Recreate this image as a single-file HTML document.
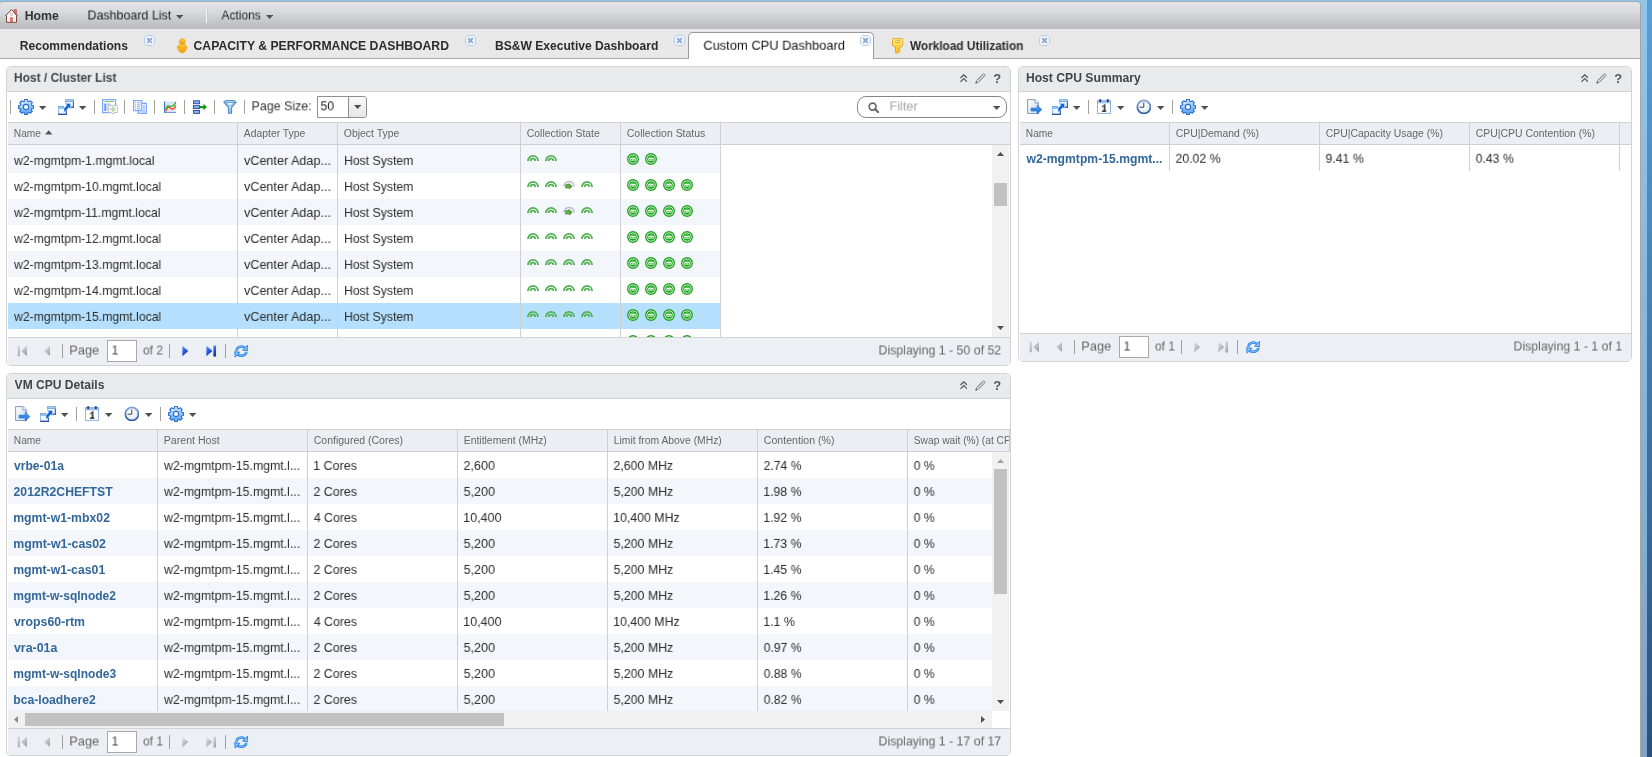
<!DOCTYPE html>
<html>
<head>
<meta charset="utf-8">
<title>Custom CPU Dashboard</title>
<style>
*{box-sizing:border-box;margin:0;padding:0}
html,body{width:1652px;height:757px;overflow:hidden;background:#fff}
body{font-family:"Liberation Sans",sans-serif;font-size:13px;color:#333;position:relative}
#root{position:absolute;left:0;top:0;width:1652px;height:757px;overflow:hidden}
#root div,#root span,#root svg{position:absolute}
.t{white-space:pre;transform-origin:0 68%;display:block;will-change:transform}
.sep{width:1px;height:14px;background:#a3a09c}
.alt{background:#f3f6fb}
.sel{background:#b5e0fd}
</style>
</head>
<body>
<svg width="0" height="0" style="position:absolute">
<defs>
<linearGradient id="gGear" x1="0" y1="0" x2="0" y2="1"><stop offset="0" stop-color="#cfe6ff"/><stop offset="0.5" stop-color="#8cc2f8"/><stop offset="1" stop-color="#5aa4f2"/></linearGradient>
<linearGradient id="gWin" x1="0" y1="0" x2="1" y2="1"><stop offset="0" stop-color="#ffffff"/><stop offset="1" stop-color="#e6effa"/></linearGradient>
<linearGradient id="gPage" x1="0" y1="0" x2="1" y2="1"><stop offset="0" stop-color="#ffffff"/><stop offset="1" stop-color="#c9daee"/></linearGradient>
<linearGradient id="gArrow" x1="0" y1="0" x2="0" y2="1"><stop offset="0" stop-color="#5aa9f8"/><stop offset="1" stop-color="#0f66d8"/></linearGradient>
<linearGradient id="gOr" x1="0" y1="0" x2="0" y2="1"><stop offset="0" stop-color="#ffcf4a"/><stop offset="1" stop-color="#f09a00"/></linearGradient>
<linearGradient id="gKey" x1="0" y1="0" x2="0" y2="1"><stop offset="0" stop-color="#fff27a"/><stop offset="1" stop-color="#ffc21a"/></linearGradient>
<linearGradient id="gNav" x1="0" y1="0" x2="0.6" y2="1"><stop offset="0" stop-color="#6fa0f8"/><stop offset="0.5" stop-color="#2a5fe0"/><stop offset="1" stop-color="#0a2db0"/></linearGradient>
<linearGradient id="gNavD" x1="0" y1="0" x2="0.6" y2="1"><stop offset="0" stop-color="#e2e2e6"/><stop offset="0.5" stop-color="#c3c4c9"/><stop offset="1" stop-color="#a2a3aa"/></linearGradient>
<linearGradient id="gRing" x1="0" y1="0" x2="0" y2="1"><stop offset="0" stop-color="#86a6d2"/><stop offset="1" stop-color="#2f5c9a"/></linearGradient>
<radialGradient id="gClock" cx="0.4" cy="0.35" r="0.7"><stop offset="0" stop-color="#ffffff"/><stop offset="1" stop-color="#e6edf6"/></radialGradient>

<symbol id="i-gear" viewBox="0 0 16 16">
 <path fill="url(#gGear)" stroke="#2a70cc" stroke-width="1.1" stroke-linejoin="round" d="M6.32 2.14 L6.55 0.54 L9.45 0.54 L9.68 2.14 L10.96 2.66 L12.25 1.70 L14.30 3.75 L13.34 5.04 L13.86 6.32 L15.46 6.55 L15.46 9.45 L13.86 9.68 L13.34 10.96 L14.30 12.25 L12.25 14.30 L10.96 13.34 L9.68 13.86 L9.45 15.46 L6.55 15.46 L6.32 13.86 L5.04 13.34 L3.75 14.30 L1.70 12.25 L2.66 10.96 L2.14 9.68 L0.54 9.45 L0.54 6.55 L2.14 6.32 L2.66 5.04 L1.70 3.75 L3.75 1.70 L5.04 2.66z"/>
 <circle cx="5" cy="4.4" r="0.9" fill="#fff" fill-opacity="0.75"/><circle cx="3.2" cy="7.6" r="0.8" fill="#fff" fill-opacity="0.6"/>
 <circle cx="8" cy="8" r="2.6" fill="#fff" stroke="#2a70cc" stroke-width="1.1"/>
</symbol>

<symbol id="i-win" viewBox="0 0 16 16">
 <rect x="7.4" y="0.4" width="8.4" height="8.2" fill="url(#gWin)"/>
 <rect x="7.1" y="0.2" width="8.8" height="2.7" fill="#68a5e3"/>
 <rect x="8" y="1.1" width="7" height="0.8" fill="#b9d8f6"/>
 <path d="M15.4 2.8v5.8" stroke="#2a5fa8" stroke-width="1.1" fill="none"/>
 <path d="M13 8.2h2.95" stroke="#1f4f98" stroke-width="1.2" fill="none"/>
 <path d="M7.6 2.8v1.6" stroke="#8fbaf0" stroke-width="1" fill="none"/>
 <rect x="0.4" y="7.3" width="8.4" height="8.3" fill="url(#gWin)"/>
 <rect x="0.1" y="7" width="5.8" height="2.7" fill="#68a5e3"/>
 <rect x="1" y="7.9" width="4" height="0.8" fill="#b9d8f6"/>
 <path d="M0.6 9.6v6" stroke="#8fbaf0" stroke-width="1" fill="none"/>
 <path d="M0.1 15.3h8.8" stroke="#1f4f98" stroke-width="1.3" fill="none"/>
 <path d="M8.4 11.4v4.4" stroke="#2a5fa8" stroke-width="1.1" fill="none"/>
 <path fill="#0a62e2" stroke="#ffffff" stroke-opacity="0.7" stroke-width="0.4" d="M7.3 4.6h5.2v5.4l-1.7-1.7-3.3 4.1-1.4 0.3v-3.4l2.9-3.1z"/>
</symbol>

<symbol id="i-tbl" viewBox="0 0 16 16">
 <rect x="0.6" y="0.6" width="13" height="13" fill="#fff" stroke="#7aa6ff" stroke-width="1.2"/>
 <rect x="2.5" y="2" width="9.4" height="1" fill="#7cc36e"/>
 <rect x="2.2" y="4.5" width="2.2" height="7.5" fill="#6f9cf3"/>
 <rect x="5.3" y="4.5" width="3" height="1.6" fill="#9ab9f8"/><rect x="5.3" y="7" width="3" height="1.6" fill="#9ab9f8"/><rect x="5.3" y="9.5" width="3" height="1.6" fill="#9ab9f8"/>
 <path d="M7.3 6.3h7.4q1 0 1 1v5.2q0 1-1 1h-2.2l-1.5 1.6-1.5-1.6h-2.2q-1 0-1-1v-5.2q0-1 1-1z" fill="#f4f4f4" stroke="#b5b5b5" stroke-width="0.8"/>
 <path d="M11 7.4l1.3 1.6h-2.6zM11 12.9l1.3-1.6h-2.6zM8 10.1l1.6-1.2v2.4zM14 10.1l-1.6-1.2v2.4z" fill="#86cf7c"/>
 <rect x="10.3" y="9.4" width="1.4" height="1.4" fill="#86cf7c"/>
</symbol>

<symbol id="i-docs" viewBox="0 0 14 14">
 <rect x="5.2" y="3.4" width="8.2" height="10" fill="#fff" stroke="#7aa6ff" stroke-width="1.2"/>
 <rect x="0.6" y="0.6" width="8.2" height="10" fill="#fff" stroke="#7aa6ff" stroke-width="1.2"/>
 <g fill="#7aa6ff"><rect x="2" y="2.3" width="1" height="1"/><rect x="4" y="2.3" width="3.4" height="1"/><rect x="2" y="4.3" width="1" height="1"/><rect x="4" y="4.3" width="3.4" height="1"/><rect x="2" y="6.3" width="1" height="1"/><rect x="4" y="6.3" width="3.4" height="1"/><rect x="2" y="8.3" width="1" height="1"/><rect x="4" y="8.3" width="3.4" height="1"/>
 <rect x="10" y="5.4" width="2.2" height="1"/><rect x="10" y="7.4" width="2.2" height="1"/><rect x="10" y="9.4" width="2.2" height="1"/><rect x="6.8" y="11.4" width="1" height="1"/><rect x="8.8" y="11.4" width="3.4" height="1"/></g>
</symbol>

<symbol id="i-chart" viewBox="0 0 13 13">
 <rect x="1" y="0.5" width="11.5" height="11" fill="#d9e6f7"/>
 <path d="M0.6 0.4v12h12" fill="none" stroke="#3f79c0" stroke-width="1.2"/>
 <path d="M1.6 10.8l2.6-4.6 2.2 1 1.8 1.3 2.2-0.6 2.2-3.4" fill="none" stroke="#ff4a1a" stroke-width="1.4" stroke-linejoin="round"/>
 <path d="M1.6 8.6l2.2-3.6 2.6 0.6 2.4-0.3 1.6-1 2.2-3.4" fill="none" stroke="#2fb82a" stroke-width="1.4" stroke-linejoin="round"/>
</symbol>

<symbol id="i-rows" viewBox="0 0 15 14">
 <g fill="#8db4ff" stroke="#2a4f9e" stroke-width="1"><rect x="0.6" y="0.6" width="6.2" height="3"/><rect x="0.6" y="5.6" width="6.2" height="3"/><rect x="0.6" y="10.6" width="6.2" height="3"/></g>
 <path d="M6.8 6h4v-2.4l3.6 3.5-3.6 3.5v-2.4h-4z" fill="#0b9a0b"/>
</symbol>

<symbol id="i-funnel" viewBox="0 0 14 14">
 <path d="M0.8 2.2l2-1.6h8.4l2 1.6-4.7 5.3v5.7h-3v-5.7z" fill="#eef5fc" stroke="#4c90d0" stroke-width="1.2" stroke-linejoin="round"/>
 <path d="M1.6 2.4h10.8M3 2.6l4 4 4-4M7 8v4.6" fill="none" stroke="#4c90d0" stroke-width="0.9"/>
</symbol>

<symbol id="i-export" viewBox="0 0 16 16">
 <path d="M0.6 0.6h7.8l3.4 3.4v11h-11.2z" fill="url(#gPage)" stroke="#8398b6" stroke-width="1"/>
 <path d="M8.2 0.8v3.4h3.4" fill="#f9fbfe" stroke="#8398b6" stroke-width="0.9"/>
 <path d="M4.2 9.3h6.3v-3.2l4.9 4.8-4.9 4.8v-3.2h-6.3z" fill="url(#gArrow)" stroke="#1a68d0" stroke-width="0.5"/>
</symbol>

<symbol id="i-cal" viewBox="0 0 14 15">
 <rect x="0.5" y="1.6" width="13" height="12.8" fill="#fff" stroke="#8fb2e2" stroke-width="1"/>
 <rect x="0.5" y="1.6" width="13" height="2.2" fill="#a3c2ea" stroke="#8fb2e2" stroke-width="1"/>
 <rect x="2.2" y="0.2" width="2" height="2.7" rx="0.5" fill="#173a72"/><rect x="9.8" y="0.2" width="2" height="2.7" rx="0.5" fill="#173a72"/>
 <path d="M4.8 7.4l2.6-2.1h1.1v6.6h-1.9v-4.7l-1.8 1.3z" fill="#4a4a4a"/>
 <rect x="4.8" y="11.6" width="4.6" height="1.2" rx="0.5" fill="#111"/>
</symbol>

<symbol id="i-clock" viewBox="0 0 16 16">
 <circle cx="8" cy="8" r="6.65" fill="url(#gClock)" stroke="url(#gRing)" stroke-width="1.8"/>
 <g fill="#b3c6e2"><circle cx="12.70" cy="8.00" r="0.5"/><circle cx="11.32" cy="11.32" r="0.5"/><circle cx="8.00" cy="12.70" r="0.5"/><circle cx="4.68" cy="11.32" r="0.5"/><circle cx="4.68" cy="4.68" r="0.5"/><circle cx="11.32" cy="4.68" r="0.5"/></g>
 <path d="M7.9 3.4v4.9h-4.3" fill="none" stroke="#3c3c3c" stroke-width="1"/>
</symbol>

<symbol id="i-first" viewBox="0 0 11 12">
 <rect x="0.4" y="0.4" width="2.7" height="11.2" stroke="#ececf0" stroke-width="0.5"/>
 <path d="M10.4 0.5v11l-6.3-5.5z"/>
</symbol>
<symbol id="i-prev" viewBox="0 0 7 12"><path d="M6.6 0.5v11l-6.3-5.5z"/></symbol>
<symbol id="i-next" viewBox="0 0 7 12"><path d="M0.4 0.5v11l6.3-5.5z"/></symbol>
<symbol id="i-last" viewBox="0 0 11 12">
 <path d="M0.4 0.5v11l6.3-5.5z"/>
 <rect x="7.6" y="0.4" width="2.9" height="11.4"/>
</symbol>

<symbol id="i-refresh" viewBox="0 0 15 14">
 <path d="M2.4 6.4A5.2 4.6 0 0 1 11.2 3.6" fill="none" stroke="#1c7ae6" stroke-width="2.6"/>
 <path d="M2.4 6.2A5.2 4.6 0 0 1 11.2 3.5" fill="none" stroke="#9fd0ff" stroke-width="0.9"/>
 <path d="M8.9 5.9l5.4 0.6-0.5-5.6z" fill="#8cc4fb" stroke="#1c7ae6" stroke-width="0.9" stroke-linejoin="round"/>
 <path d="M12.6 7.6A5.2 4.6 0 0 1 3.8 10.4" fill="none" stroke="#1c7ae6" stroke-width="2.6"/>
 <path d="M12.6 7.8A5.2 4.6 0 0 1 3.8 10.5" fill="none" stroke="#9fd0ff" stroke-width="0.9"/>
 <path d="M6.1 8.1l-5.4-0.6 0.5 5.6z" fill="#8cc4fb" stroke="#1c7ae6" stroke-width="0.9" stroke-linejoin="round"/>
</symbol>

<symbol id="i-collapse" viewBox="0 0 8 9"><path d="M0.5 4.2l3.5-3.4 3.5 3.4M0.5 8.3l3.5-3.4 3.5 3.4" fill="none" stroke="#555" stroke-width="1.3"/></symbol>
<symbol id="i-pencil" viewBox="0 0 12 12">
 <path d="M0.8 11.2l0.9-3 7-7q0.8-0.6 1.7 0.2 0.8 0.9 0.2 1.7l-7 7z" fill="#f2f2f2" stroke="#7d7d7d" stroke-width="1" stroke-linejoin="round"/>
 <path d="M2.6 8.6l6.6-6.6M3.6 9.8l6.8-6.8" stroke="#909090" stroke-width="0.8" fill="none"/>
 <path d="M0.7 11.3l0.6-2 1.4 1.4z" fill="#555"/>
</symbol>
<symbol id="i-close" viewBox="0 0 11 11">
 <path d="M2.6 0.5h5.8l2.1 2.1v5.8l-2.1 2.1h-5.8l-2.1-2.1v-5.8z" fill="#f1f5fb" stroke="#b7cdee" stroke-width="1"/>
 <path d="M3.2 3.2l4.6 4.6M7.8 3.2l-4.6 4.6" stroke="#8aa6d4" stroke-width="1.7"/>
</symbol>

<symbol id="i-home" viewBox="0 0 13 14">
 <rect x="9.2" y="0.5" width="2.3" height="5" fill="#ee6a6a" stroke="#a05a4a" stroke-width="0.6"/>
 <path d="M1.4 6.9v6.4h10.2v-6.4l-5.1-5.6z" fill="#fbf8f0"/>
 <path d="M0.4 6.9l6.1-6.3 6.1 6.3" fill="none" stroke="#7a4838" stroke-width="1" stroke-linejoin="round"/>
 <path d="M1.5 6.4v6.9h10v-6.9" fill="none" stroke="#7a4838" stroke-width="1"/>
 <rect x="5.3" y="8.5" width="2.3" height="4.4" fill="#f06a6a" stroke="#d04a4a" stroke-width="0.4"/>
 <rect x="5.5" y="4.2" width="2" height="2" fill="#fff" stroke="#b8a8b8" stroke-width="0.6"/>
</symbol>

<symbol id="i-person" viewBox="0 0 11 16">
 <ellipse cx="5.5" cy="10.4" rx="4.3" ry="5.2" fill="url(#gOr)" stroke="#f0a010" stroke-width="0.6"/>
 <ellipse cx="1.1" cy="9.6" rx="1" ry="1.6" fill="#f6a90c"/><ellipse cx="9.9" cy="9.6" rx="1" ry="1.6" fill="#f6a90c"/>
 <circle cx="5.5" cy="3.6" r="3.1" fill="url(#gOr)" stroke="#f0a010" stroke-width="0.6"/>
</symbol>

<symbol id="i-key" viewBox="0 0 12 16">
 <path d="M1.5 0.6h9q1 0 1 1v5.6l-1.5 1.6h-1.4v0.8l-1 1 1 0.9-1 1 1 0.9-2.2 2.2h-2.8v-6.8h-1.6l-1.5-1.6v-5.6q0-1 1-1z" fill="url(#gKey)" stroke="#dfa02c" stroke-width="1" stroke-linejoin="round"/>
 <rect x="3.7" y="2.7" width="4.6" height="1.9" rx="0.95" fill="#fffce6" stroke="#dc982a" stroke-width="0.9"/>
 <path d="M5 9.5l2 -1M5 12l2.2-1.4M5 14.4l1.8-1.2" stroke="#ffa800" stroke-width="0.7" fill="none"/>
</symbol>

<symbol id="i-arc" viewBox="0 0 12 7">
 <path d="M1 6.9a5 5 0 0 1 10 0" fill="none" stroke="#52b052" stroke-width="1.9"/>
 <path d="M3.7 6.9a2.3 2.3 0 0 1 4.6 0" fill="none" stroke="#52b052" stroke-width="1.7"/>
</symbol>
<symbol id="i-arcg" viewBox="0 0 12 10">
 <path d="M0.8 6.6a5.2 5.2 0 0 1 10.4 0" fill="none" stroke="#b4bcc9" stroke-width="1.5"/>
 <path d="M2.2 4.6l2.6-0.5 1.6-0.9 0.5 1 2.8 1.8-3.3 3.6-0.5-1.3-3.7 0.2z" fill="#4f9a34"/>
 <path d="M3.4 6.3h3.6" stroke="#a6d48a" stroke-width="0.7"/>
</symbol>
<symbol id="i-stat" viewBox="0 0 12 12">
 <circle cx="6" cy="6" r="5.3" fill="#fff" stroke="#1fa31f" stroke-width="1.4"/>
 <circle cx="6" cy="6" r="3.8" fill="#1fa31f"/>
 <path d="M3.3 5.5l0.9-1.2 0.8 0.6h2l0.8-0.6 0.9 1.2v2h-5.4z" fill="#fff"/>
 <path d="M5 4.2l1-0.9 1 0.9z" fill="#fff"/>
 <rect x="3.6" y="5.7" width="4.8" height="1.7" fill="#b5e6ae"/>
 <rect x="4.3" y="6.1" width="0.9" height="0.9" fill="#1fa31f"/><rect x="6.8" y="6.1" width="0.9" height="0.9" fill="#1fa31f"/>
</symbol>
<symbol id="i-mag" viewBox="0 0 11 11">
 <circle cx="4.4" cy="4.4" r="3.3" fill="none" stroke="#666" stroke-width="1.6"/>
 <path d="M6.8 6.8l3.4 3.4" stroke="#666" stroke-width="2" stroke-linecap="round"/>
</symbol>
</defs>
</svg>
<div id="root">
<div style="left:0px;top:0px;width:1652px;height:3px;background:#8fc5ea"></div>
<div style="left:1640px;top:0px;width:7px;height:757px;background:linear-gradient(#91c5ea,#7fa3c5)"></div>
<div style="left:1647px;top:0px;width:5px;height:757px;background:linear-gradient(#5a9fd4,#29507d)"></div>
<div style="left:0px;top:1.3px;width:1640px;height:27.4px;border-radius:3px 4px 0 0;border-top:1px solid #a9aaad;background:linear-gradient(#e3e4e7 0%,#d9dadd 35%,#c7c8cc 70%,#b9babe 100%)"></div>
<div style="left:1640px;top:3px;width:1px;height:754px;background:#a6a6a8"></div>
<svg style="left:5px;top:9px" width="13" height="14"><use href="#i-home"/></svg>
<span class="t" style="left:24px;top:7px;font-size:12px;line-height:16px;color:#333;font-weight:bold;transform:translate(0.68px,0.84px) scale(1.0271,1.083);transform-origin:0 12.16px;">Home</span>
<span class="t" style="left:87px;top:7px;font-size:13px;line-height:16px;color:#262626;transform:translate(0.48px,0.50px) scaleX(0.9584);transform-origin:0 12.50px;">Dashboard List</span>
<svg style="left:176px;top:14.5px" width="7.2" height="4"><path d="M0 0h7.2l-3.6 4z" fill="#505050"/></svg>
<div style="left:206px;top:9px;width:1px;height:14px;background:#f4f4f4"></div>
<div style="left:207px;top:9px;width:1px;height:14px;background:#c9c9cc"></div>
<span class="t" style="left:221px;top:7px;font-size:13px;line-height:16px;color:#262626;transform:translate(0.48px,0.50px) scaleX(0.9182);transform-origin:0 12.50px;">Actions</span>
<svg style="left:266px;top:14.5px" width="7.2" height="4"><path d="M0 0h7.2l-3.6 4z" fill="#505050"/></svg>
<div style="left:0px;top:29px;width:1640px;height:30px;background:#e8e8e8;border-bottom:1px solid #a9a9a9"></div>
<span class="t" style="left:19px;top:38px;font-size:12px;line-height:16px;color:#2c2c2c;font-weight:bold;transform:translate(0.69px,0.04px) scale(1.0088,1.083);transform-origin:0 12.16px;">Recommendations</span>
<svg style="left:144px;top:35px" width="11" height="11"><use href="#i-close"/></svg>
<svg style="left:177px;top:38px" width="10.5" height="15.5"><use href="#i-person"/></svg>
<span class="t" style="left:193px;top:38px;font-size:12px;line-height:16px;color:#2c2c2c;font-weight:bold;transform:translate(0.50px,0.04px) scale(1.0184,1.083);transform-origin:0 12.16px;">CAPACITY &amp; PERFORMANCE DASHBOARD</span>
<svg style="left:465px;top:35px" width="11" height="11"><use href="#i-close"/></svg>
<span class="t" style="left:494px;top:38px;font-size:12px;line-height:16px;color:#2c2c2c;font-weight:bold;transform:translate(0.89px,0.04px) scale(1.0084,1.083);transform-origin:0 12.16px;">BS&amp;W Executive Dashboard</span>
<svg style="left:674px;top:35px" width="11" height="11"><use href="#i-close"/></svg>
<div style="left:688px;top:32px;width:186px;height:27px;background:#fff;border:1px solid #9a9a9a;border-bottom:0;border-radius:5px 5px 0 0"></div>
<span class="t" style="left:703px;top:37px;font-size:13px;line-height:16px;color:#141414;transform:translate(0.35px,0.70px) scaleX(0.9904);transform-origin:0 12.50px;">Custom CPU Dashboard</span>
<svg style="left:860px;top:35px" width="11" height="11"><use href="#i-close"/></svg>
<svg style="left:892px;top:38px" width="11.5" height="15.5"><use href="#i-key"/></svg>
<span class="t" style="left:909px;top:38px;font-size:12px;line-height:16px;color:#2c2c2c;font-weight:bold;transform:translate(0.99px,0.04px) scale(0.9854,1.083);transform-origin:0 12.16px;">Workload Utilization</span>
<svg style="left:1039px;top:35px" width="11" height="11"><use href="#i-close"/></svg>
<div style="left:6px;top:66px;width:1005px;height:300px;border:1px solid #d3d3d3;border-radius:5px;background:#fff"></div>
<div style="left:7px;top:67px;width:1003px;height:24px;background:#e9eaeb;border-radius:4px 4px 0 0"></div>
<div style="left:7px;top:91px;width:1003px;height:1px;background:#d3d3d3"></div>
<span class="t" style="left:13px;top:69px;font-size:12px;line-height:16px;color:#444;font-weight:bold;transform:translate(0.90px,0.84px) scale(0.9977,1.083);transform-origin:0 12.16px;">Host / Cluster List</span>
<svg style="left:959.5px;top:74px" width="7.5" height="8.5"><use href="#i-collapse"/></svg>
<svg style="left:975px;top:73px" width="11" height="11"><use href="#i-pencil"/></svg>
<span class="t" style="left:993px;top:70px;font-size:12px;line-height:16px;color:#555;font-weight:bold;transform:translate(0.20px,0.64px) scale(1.0817,1.083);transform-origin:0 12.16px;">?</span>
<div class="sep" style="left:10px;top:100px;height:14px"></div>
<svg style="left:18px;top:99px" width="16" height="16"><use href="#i-gear"/></svg>
<svg style="left:39px;top:106px" width="7.2" height="4"><path d="M0 0h7.2l-3.6 4z" fill="#505050"/></svg>
<svg style="left:58px;top:99px" width="16" height="16"><use href="#i-win"/></svg>
<svg style="left:79px;top:106px" width="7.2" height="4"><path d="M0 0h7.2l-3.6 4z" fill="#505050"/></svg>
<div class="sep" style="left:94px;top:100px;height:14px"></div>
<svg style="left:102px;top:99px" width="16" height="16"><use href="#i-tbl"/></svg>
<div class="sep" style="left:124px;top:100px;height:14px"></div>
<svg style="left:133px;top:100px" width="14" height="14"><use href="#i-docs"/></svg>
<div class="sep" style="left:154px;top:100px;height:14px"></div>
<svg style="left:164px;top:100.5px" width="12.5" height="12.5"><use href="#i-chart"/></svg>
<div class="sep" style="left:184px;top:100px;height:14px"></div>
<svg style="left:192.5px;top:100px" width="14.5" height="14"><use href="#i-rows"/></svg>
<div class="sep" style="left:214px;top:100px;height:14px"></div>
<svg style="left:223px;top:100.3px" width="14" height="14"><use href="#i-funnel"/></svg>
<div class="sep" style="left:244px;top:100px;height:14px"></div>
<span class="t" style="left:251px;top:98px;font-size:13px;line-height:16px;color:#333;transform:translate(0.48px,0.30px) scaleX(0.9568);transform-origin:0 12.50px;">Page Size:</span>
<div style="left:317px;top:96px;width:50px;height:22px;border:1px solid #8f8f8f;background:#fff;border-radius:0 3px 3px 0"></div>
<div style="left:348px;top:97px;width:1px;height:20px;background:#8f8f8f"></div>
<div style="left:349px;top:97px;width:17px;height:20px;background:linear-gradient(#f8f8f8,#e6e6e6);border-radius:0 2px 2px 0"></div>
<span class="t" style="left:320px;top:98px;font-size:13px;line-height:16px;color:#222;transform:translate(0.50px,0.30px) scaleX(0.9350);transform-origin:0 12.50px;">50</span>
<svg style="left:354px;top:105px" width="7.2" height="4"><path d="M0 0h7.2l-3.6 4z" fill="#505050"/></svg>
<div style="left:857px;top:96px;width:150px;height:22px;border:1px solid #868686;background:#fff;border-radius:9px"></div>
<svg style="left:867.8px;top:101.5px" width="11.5" height="11.5"><use href="#i-mag"/></svg>
<span class="t" style="left:889px;top:98px;font-size:13px;line-height:16px;color:#a8a8a8;transform:translate(0.46px,0.50px) scaleX(0.9780);transform-origin:0 12.50px;">Filter</span>
<svg style="left:993px;top:106px" width="7.2" height="4"><path d="M0 0h7.2l-3.6 4z" fill="#505050"/></svg>
<div style="left:8px;top:122px;width:1002px;height:23px;background:#ebeef2;border-top:1px solid #d3d3d3;border-bottom:1px solid #cfcfcf"></div>
<span class="t" style="left:13px;top:127px;font-size:10px;line-height:13px;color:#666;transform:translate(0.80px,0.23px) scaleX(1.0188);transform-origin:0 9.96px;">Name</span>
<div style="left:237px;top:122px;width:1px;height:23px;background:#cfcfcf"></div>
<span class="t" style="left:243px;top:127px;font-size:10px;line-height:13px;color:#666;transform:translate(0.80px,0.23px) scaleX(1.0366);transform-origin:0 9.96px;">Adapter Type</span>
<div style="left:337px;top:122px;width:1px;height:23px;background:#cfcfcf"></div>
<span class="t" style="left:343px;top:127px;font-size:10px;line-height:13px;color:#666;transform:translate(0.80px,0.23px) scaleX(1.0427);transform-origin:0 9.96px;">Object Type</span>
<div style="left:520px;top:122px;width:1px;height:23px;background:#cfcfcf"></div>
<span class="t" style="left:526px;top:127px;font-size:10px;line-height:13px;color:#666;transform:translate(0.80px,0.23px) scaleX(1.0420);transform-origin:0 9.96px;">Collection State</span>
<div style="left:620px;top:122px;width:1px;height:23px;background:#cfcfcf"></div>
<span class="t" style="left:626px;top:127px;font-size:10px;line-height:13px;color:#666;transform:translate(0.80px,0.23px) scaleX(1.0461);transform-origin:0 9.96px;">Collection Status</span>
<div style="left:720px;top:122px;width:1px;height:23px;background:#cfcfcf"></div>
<svg style="left:45px;top:130px" width="8" height="5"><path d="M0 4.6l3.7-4.4 3.7 4.4z" fill="#555"/></svg>
<div style="left:8px;top:145px;width:713px;height:2px;background:#f3f6fb"></div>
<div class="alt" style="left:8px;top:147px;width:713px;height:26px"></div>
<span class="t" style="left:14px;top:152px;font-size:13px;line-height:16px;color:#2a2a2a;transform:translate(0.00px,0.90px) scaleX(0.9389);transform-origin:0 12.50px;">w2-mgmtpm-1.mgmt.local</span>
<span class="t" style="left:244px;top:152px;font-size:13px;line-height:16px;color:#2a2a2a;transform:translate(0.00px,0.90px) scaleX(0.9707);transform-origin:0 12.50px;">vCenter Adap...</span>
<span class="t" style="left:344px;top:152px;font-size:13px;line-height:16px;color:#2a2a2a;transform:translate(0.00px,0.90px) scaleX(0.9420);transform-origin:0 12.50px;">Host System</span>
<svg style="left:527px;top:154px" width="12" height="7"><use href="#i-arc"/></svg>
<svg style="left:545px;top:154px" width="12" height="7"><use href="#i-arc"/></svg>
<svg style="left:627px;top:153px" width="12" height="12"><use href="#i-stat"/></svg>
<svg style="left:645px;top:153px" width="12" height="12"><use href="#i-stat"/></svg>
<span class="t" style="left:14px;top:178px;font-size:13px;line-height:16px;color:#2a2a2a;transform:translate(0.00px,0.90px) scaleX(0.9390);transform-origin:0 12.50px;">w2-mgmtpm-10.mgmt.local</span>
<span class="t" style="left:244px;top:178px;font-size:13px;line-height:16px;color:#2a2a2a;transform:translate(0.00px,0.90px) scaleX(0.9707);transform-origin:0 12.50px;">vCenter Adap...</span>
<span class="t" style="left:344px;top:178px;font-size:13px;line-height:16px;color:#2a2a2a;transform:translate(0.00px,0.90px) scaleX(0.9420);transform-origin:0 12.50px;">Host System</span>
<svg style="left:527px;top:180px" width="12" height="7"><use href="#i-arc"/></svg>
<svg style="left:545px;top:180px" width="12" height="7"><use href="#i-arc"/></svg>
<svg style="left:563px;top:180px" width="12" height="10"><use href="#i-arcg"/></svg>
<svg style="left:581px;top:180px" width="12" height="7"><use href="#i-arc"/></svg>
<svg style="left:627px;top:179px" width="12" height="12"><use href="#i-stat"/></svg>
<svg style="left:645px;top:179px" width="12" height="12"><use href="#i-stat"/></svg>
<svg style="left:663px;top:179px" width="12" height="12"><use href="#i-stat"/></svg>
<svg style="left:681px;top:179px" width="12" height="12"><use href="#i-stat"/></svg>
<div class="alt" style="left:8px;top:199px;width:713px;height:26px"></div>
<span class="t" style="left:14px;top:204px;font-size:13px;line-height:16px;color:#2a2a2a;transform:translate(0.00px,0.90px) scaleX(0.9397);transform-origin:0 12.50px;">w2-mgmtpm-11.mgmt.local</span>
<span class="t" style="left:244px;top:204px;font-size:13px;line-height:16px;color:#2a2a2a;transform:translate(0.00px,0.90px) scaleX(0.9707);transform-origin:0 12.50px;">vCenter Adap...</span>
<span class="t" style="left:344px;top:204px;font-size:13px;line-height:16px;color:#2a2a2a;transform:translate(0.00px,0.90px) scaleX(0.9420);transform-origin:0 12.50px;">Host System</span>
<svg style="left:527px;top:206px" width="12" height="7"><use href="#i-arc"/></svg>
<svg style="left:545px;top:206px" width="12" height="7"><use href="#i-arc"/></svg>
<svg style="left:563px;top:206px" width="12" height="10"><use href="#i-arcg"/></svg>
<svg style="left:581px;top:206px" width="12" height="7"><use href="#i-arc"/></svg>
<svg style="left:627px;top:205px" width="12" height="12"><use href="#i-stat"/></svg>
<svg style="left:645px;top:205px" width="12" height="12"><use href="#i-stat"/></svg>
<svg style="left:663px;top:205px" width="12" height="12"><use href="#i-stat"/></svg>
<svg style="left:681px;top:205px" width="12" height="12"><use href="#i-stat"/></svg>
<span class="t" style="left:14px;top:230px;font-size:13px;line-height:16px;color:#2a2a2a;transform:translate(0.00px,0.90px) scaleX(0.9390);transform-origin:0 12.50px;">w2-mgmtpm-12.mgmt.local</span>
<span class="t" style="left:244px;top:230px;font-size:13px;line-height:16px;color:#2a2a2a;transform:translate(0.00px,0.90px) scaleX(0.9707);transform-origin:0 12.50px;">vCenter Adap...</span>
<span class="t" style="left:344px;top:230px;font-size:13px;line-height:16px;color:#2a2a2a;transform:translate(0.00px,0.90px) scaleX(0.9420);transform-origin:0 12.50px;">Host System</span>
<svg style="left:527px;top:232px" width="12" height="7"><use href="#i-arc"/></svg>
<svg style="left:545px;top:232px" width="12" height="7"><use href="#i-arc"/></svg>
<svg style="left:563px;top:232px" width="12" height="7"><use href="#i-arc"/></svg>
<svg style="left:581px;top:232px" width="12" height="7"><use href="#i-arc"/></svg>
<svg style="left:627px;top:231px" width="12" height="12"><use href="#i-stat"/></svg>
<svg style="left:645px;top:231px" width="12" height="12"><use href="#i-stat"/></svg>
<svg style="left:663px;top:231px" width="12" height="12"><use href="#i-stat"/></svg>
<svg style="left:681px;top:231px" width="12" height="12"><use href="#i-stat"/></svg>
<div class="alt" style="left:8px;top:251px;width:713px;height:26px"></div>
<span class="t" style="left:14px;top:256px;font-size:13px;line-height:16px;color:#2a2a2a;transform:translate(0.00px,0.90px) scaleX(0.9390);transform-origin:0 12.50px;">w2-mgmtpm-13.mgmt.local</span>
<span class="t" style="left:244px;top:256px;font-size:13px;line-height:16px;color:#2a2a2a;transform:translate(0.00px,0.90px) scaleX(0.9707);transform-origin:0 12.50px;">vCenter Adap...</span>
<span class="t" style="left:344px;top:256px;font-size:13px;line-height:16px;color:#2a2a2a;transform:translate(0.00px,0.90px) scaleX(0.9420);transform-origin:0 12.50px;">Host System</span>
<svg style="left:527px;top:258px" width="12" height="7"><use href="#i-arc"/></svg>
<svg style="left:545px;top:258px" width="12" height="7"><use href="#i-arc"/></svg>
<svg style="left:563px;top:258px" width="12" height="7"><use href="#i-arc"/></svg>
<svg style="left:581px;top:258px" width="12" height="7"><use href="#i-arc"/></svg>
<svg style="left:627px;top:257px" width="12" height="12"><use href="#i-stat"/></svg>
<svg style="left:645px;top:257px" width="12" height="12"><use href="#i-stat"/></svg>
<svg style="left:663px;top:257px" width="12" height="12"><use href="#i-stat"/></svg>
<svg style="left:681px;top:257px" width="12" height="12"><use href="#i-stat"/></svg>
<span class="t" style="left:14px;top:282px;font-size:13px;line-height:16px;color:#2a2a2a;transform:translate(0.00px,0.90px) scaleX(0.9390);transform-origin:0 12.50px;">w2-mgmtpm-14.mgmt.local</span>
<span class="t" style="left:244px;top:282px;font-size:13px;line-height:16px;color:#2a2a2a;transform:translate(0.00px,0.90px) scaleX(0.9707);transform-origin:0 12.50px;">vCenter Adap...</span>
<span class="t" style="left:344px;top:282px;font-size:13px;line-height:16px;color:#2a2a2a;transform:translate(0.00px,0.90px) scaleX(0.9420);transform-origin:0 12.50px;">Host System</span>
<svg style="left:527px;top:284px" width="12" height="7"><use href="#i-arc"/></svg>
<svg style="left:545px;top:284px" width="12" height="7"><use href="#i-arc"/></svg>
<svg style="left:563px;top:284px" width="12" height="7"><use href="#i-arc"/></svg>
<svg style="left:581px;top:284px" width="12" height="7"><use href="#i-arc"/></svg>
<svg style="left:627px;top:283px" width="12" height="12"><use href="#i-stat"/></svg>
<svg style="left:645px;top:283px" width="12" height="12"><use href="#i-stat"/></svg>
<svg style="left:663px;top:283px" width="12" height="12"><use href="#i-stat"/></svg>
<svg style="left:681px;top:283px" width="12" height="12"><use href="#i-stat"/></svg>
<div class="sel" style="left:8px;top:303px;width:713px;height:26px"></div>
<span class="t" style="left:14px;top:308px;font-size:13px;line-height:16px;color:#2a2a2a;transform:translate(0.00px,0.90px) scaleX(0.9390);transform-origin:0 12.50px;">w2-mgmtpm-15.mgmt.local</span>
<span class="t" style="left:244px;top:308px;font-size:13px;line-height:16px;color:#2a2a2a;transform:translate(0.00px,0.90px) scaleX(0.9707);transform-origin:0 12.50px;">vCenter Adap...</span>
<span class="t" style="left:344px;top:308px;font-size:13px;line-height:16px;color:#2a2a2a;transform:translate(0.00px,0.90px) scaleX(0.9420);transform-origin:0 12.50px;">Host System</span>
<svg style="left:527px;top:310px" width="12" height="7"><use href="#i-arc"/></svg>
<svg style="left:545px;top:310px" width="12" height="7"><use href="#i-arc"/></svg>
<svg style="left:563px;top:310px" width="12" height="7"><use href="#i-arc"/></svg>
<svg style="left:581px;top:310px" width="12" height="7"><use href="#i-arc"/></svg>
<svg style="left:627px;top:309px" width="12" height="12"><use href="#i-stat"/></svg>
<svg style="left:645px;top:309px" width="12" height="12"><use href="#i-stat"/></svg>
<svg style="left:663px;top:309px" width="12" height="12"><use href="#i-stat"/></svg>
<svg style="left:681px;top:309px" width="12" height="12"><use href="#i-stat"/></svg>
<svg style="left:627px;top:335px" width="12" height="12"><use href="#i-stat"/></svg>
<svg style="left:645px;top:335px" width="12" height="12"><use href="#i-stat"/></svg>
<svg style="left:663px;top:335px" width="12" height="12"><use href="#i-stat"/></svg>
<svg style="left:681px;top:335px" width="12" height="12"><use href="#i-stat"/></svg>
<div style="left:237px;top:145px;width:1px;height:192px;background:#d0d0d0"></div>
<div style="left:337px;top:145px;width:1px;height:192px;background:#d0d0d0"></div>
<div style="left:520px;top:145px;width:1px;height:192px;background:#d0d0d0"></div>
<div style="left:620px;top:145px;width:1px;height:192px;background:#d0d0d0"></div>
<div style="left:720px;top:145px;width:1px;height:192px;background:#d0d0d0"></div>
<div style="left:992px;top:145px;width:17px;height:192px;background:#f1f1f1"></div>
<div style="left:994px;top:183px;width:13px;height:23px;background:#c1c1c1"></div>
<svg style="left:997px;top:152px" width="7" height="4"><path d="M0 4l3.5-4 3.5 4z" fill="#505050"/></svg>
<svg style="left:997px;top:326px" width="7" height="4"><path d="M0 0l3.5 4 3.5-4z" fill="#505050"/></svg>
<div style="left:8px;top:337px;width:1002px;height:28px;background:#eceff4;border-top:1px solid #d3d3d3"></div>
<svg style="left:17px;top:344.7px;fill:url(#gNavD)" width="10.5" height="12"><use href="#i-first"/></svg>
<svg style="left:43.5px;top:344.7px;fill:url(#gNavD)" width="6.6" height="12"><use href="#i-prev"/></svg>
<div class="sep" style="left:62px;top:344px;height:14px"></div>
<span class="t" style="left:69px;top:342px;font-size:13px;line-height:16px;color:#666;transform:translate(0.25px,0.50px) scaleX(0.9815);transform-origin:0 12.50px;">Page</span>
<div style="left:107px;top:340px;width:30px;height:22px;border:1px solid #a9a9a9;background:#fff"></div>
<span class="t" style="left:111px;top:342px;font-size:13px;line-height:16px;color:#444;transform:translate(0.60px,0.50px) scaleX(0.9350);transform-origin:0 12.50px;">1</span>
<span class="t" style="left:142px;top:342px;font-size:13px;line-height:16px;color:#666;transform:translate(0.89px,0.50px) scaleX(0.9274);transform-origin:0 12.50px;">of 2</span>
<div class="sep" style="left:169px;top:344px;height:14px"></div>
<svg style="left:181.5px;top:344.7px;fill:url(#gNav)" width="6.6" height="12"><use href="#i-next"/></svg>
<svg style="left:206px;top:344.7px;fill:url(#gNav)" width="10.5" height="12"><use href="#i-last"/></svg>
<div class="sep" style="left:225px;top:344px;height:14px"></div>
<svg style="left:233.8px;top:343.7px" width="14.6" height="14.4"><use href="#i-refresh"/></svg>
<span class="t" style="left:878px;top:342px;font-size:13px;line-height:16px;color:#666;transform:translate(0.49px,0.50px) scaleX(0.9480);transform-origin:0 12.50px;">Displaying 1 - 50 of 52</span>
<div style="left:1018px;top:66px;width:614px;height:296px;border:1px solid #d3d3d3;border-radius:5px;background:#fff"></div>
<div style="left:1019px;top:67px;width:612px;height:24px;background:#e9eaeb;border-radius:4px 4px 0 0"></div>
<div style="left:1019px;top:91px;width:612px;height:1px;background:#d3d3d3"></div>
<span class="t" style="left:1025px;top:69px;font-size:12px;line-height:16px;color:#444;font-weight:bold;transform:translate(0.89px,0.84px) scale(1.0133,1.083);transform-origin:0 12.16px;">Host CPU Summary</span>
<svg style="left:1580.5px;top:74px" width="7.5" height="8.5"><use href="#i-collapse"/></svg>
<svg style="left:1596px;top:73px" width="11" height="11"><use href="#i-pencil"/></svg>
<span class="t" style="left:1614px;top:70px;font-size:12px;line-height:16px;color:#555;font-weight:bold;transform:translate(0.20px,0.64px) scale(1.0817,1.083);transform-origin:0 12.16px;">?</span>
<svg style="left:1027px;top:99px" width="15.5" height="15.5"><use href="#i-export"/></svg>
<svg style="left:1052px;top:99px" width="16" height="16"><use href="#i-win"/></svg>
<svg style="left:1073px;top:106px" width="7.2" height="4"><path d="M0 0h7.2l-3.6 4z" fill="#505050"/></svg>
<div class="sep" style="left:1088px;top:100px;height:14px"></div>
<svg style="left:1097px;top:99px" width="14" height="15"><use href="#i-cal"/></svg>
<svg style="left:1117px;top:106px" width="7.2" height="4"><path d="M0 0h7.2l-3.6 4z" fill="#505050"/></svg>
<svg style="left:1135.6px;top:98.6px" width="15.8" height="15.8"><use href="#i-clock"/></svg>
<svg style="left:1157px;top:106px" width="7.2" height="4"><path d="M0 0h7.2l-3.6 4z" fill="#505050"/></svg>
<div class="sep" style="left:1172px;top:100px;height:14px"></div>
<svg style="left:1180px;top:99px" width="16" height="16"><use href="#i-gear"/></svg>
<svg style="left:1201px;top:106px" width="7.2" height="4"><path d="M0 0h7.2l-3.6 4z" fill="#505050"/></svg>
<div style="left:1020px;top:122px;width:611px;height:23px;background:#ebeef2;border-top:1px solid #d3d3d3;border-bottom:1px solid #cfcfcf"></div>
<span class="t" style="left:1025px;top:127px;font-size:10px;line-height:13px;color:#666;transform:translate(0.80px,0.23px) scaleX(1.0188);transform-origin:0 9.96px;">Name</span>
<div style="left:1169px;top:122px;width:1px;height:23px;background:#cfcfcf"></div>
<span class="t" style="left:1175px;top:127px;font-size:10px;line-height:13px;color:#666;transform:translate(0.80px,0.23px) scaleX(1.0417);transform-origin:0 9.96px;">CPU|Demand (%)</span>
<div style="left:1319px;top:122px;width:1px;height:23px;background:#cfcfcf"></div>
<span class="t" style="left:1325px;top:127px;font-size:10px;line-height:13px;color:#666;transform:translate(0.80px,0.23px) scaleX(1.0402);transform-origin:0 9.96px;">CPU|Capacity Usage (%)</span>
<div style="left:1469px;top:122px;width:1px;height:23px;background:#cfcfcf"></div>
<span class="t" style="left:1475px;top:127px;font-size:10px;line-height:13px;color:#666;transform:translate(0.80px,0.23px) scaleX(1.0425);transform-origin:0 9.96px;">CPU|CPU Contention (%)</span>
<div style="left:1619px;top:122px;width:1px;height:23px;background:#cfcfcf"></div>
<span class="t" style="left:1026px;top:151px;font-size:12px;line-height:16px;color:#336699;font-weight:bold;transform:translate(0.44px,0.14px) scale(1.0148,1.083);transform-origin:0 12.16px;">w2-mgmtpm-15.mgmt...</span>
<span class="t" style="left:1175px;top:150px;font-size:13px;line-height:16px;color:#2a2a2a;transform:translate(0.48px,0.80px) scaleX(0.9445);transform-origin:0 12.50px;">20.02 %</span>
<span class="t" style="left:1325px;top:150px;font-size:13px;line-height:16px;color:#2a2a2a;transform:translate(0.52px,0.80px) scaleX(0.9439);transform-origin:0 12.50px;">9.41 %</span>
<span class="t" style="left:1475px;top:150px;font-size:13px;line-height:16px;color:#2a2a2a;transform:translate(0.62px,0.80px) scaleX(0.9415);transform-origin:0 12.50px;">0.43 %</span>
<div style="left:1169px;top:145px;width:1px;height:26px;background:#d0d0d0"></div>
<div style="left:1319px;top:145px;width:1px;height:26px;background:#d0d0d0"></div>
<div style="left:1469px;top:145px;width:1px;height:26px;background:#d0d0d0"></div>
<div style="left:1619px;top:145px;width:1px;height:26px;background:#d0d0d0"></div>
<div style="left:1020px;top:333px;width:611px;height:28px;background:#eceff4;border-top:1px solid #d3d3d3"></div>
<svg style="left:1029px;top:340.7px;fill:url(#gNavD)" width="10.5" height="12"><use href="#i-first"/></svg>
<svg style="left:1055.5px;top:340.7px;fill:url(#gNavD)" width="6.6" height="12"><use href="#i-prev"/></svg>
<div class="sep" style="left:1074px;top:340px;height:14px"></div>
<span class="t" style="left:1081px;top:338px;font-size:13px;line-height:16px;color:#666;transform:translate(0.25px,0.50px) scaleX(0.9815);transform-origin:0 12.50px;">Page</span>
<div style="left:1119px;top:336px;width:30px;height:22px;border:1px solid #a9a9a9;background:#fff"></div>
<span class="t" style="left:1123px;top:338px;font-size:13px;line-height:16px;color:#444;transform:translate(0.60px,0.50px) scaleX(0.9350);transform-origin:0 12.50px;">1</span>
<span class="t" style="left:1154px;top:338px;font-size:13px;line-height:16px;color:#666;transform:translate(0.89px,0.50px) scaleX(0.9265);transform-origin:0 12.50px;">of 1</span>
<div class="sep" style="left:1181px;top:340px;height:14px"></div>
<svg style="left:1193.5px;top:340.7px;fill:url(#gNavD)" width="6.6" height="12"><use href="#i-next"/></svg>
<svg style="left:1218px;top:340.7px;fill:url(#gNavD)" width="10.5" height="12"><use href="#i-last"/></svg>
<div class="sep" style="left:1237px;top:340px;height:14px"></div>
<svg style="left:1245.8px;top:339.7px" width="14.6" height="14.4"><use href="#i-refresh"/></svg>
<span class="t" style="left:1513px;top:338px;font-size:13px;line-height:16px;color:#666;transform:translate(0.49px,0.50px) scaleX(0.9452);transform-origin:0 12.50px;">Displaying 1 - 1 of 1</span>
<div style="left:6px;top:373px;width:1005px;height:383px;border:1px solid #d3d3d3;border-radius:5px;background:#fff"></div>
<div style="left:7px;top:374px;width:1003px;height:24px;background:#e9eaeb;border-radius:4px 4px 0 0"></div>
<div style="left:7px;top:398px;width:1003px;height:1px;background:#d3d3d3"></div>
<span class="t" style="left:14px;top:376px;font-size:12px;line-height:16px;color:#444;font-weight:bold;transform:translate(0.62px,0.84px) scale(1.0047,1.083);transform-origin:0 12.16px;">VM CPU Details</span>
<svg style="left:959.5px;top:381px" width="7.5" height="8.5"><use href="#i-collapse"/></svg>
<svg style="left:975px;top:380px" width="11" height="11"><use href="#i-pencil"/></svg>
<span class="t" style="left:993px;top:377px;font-size:12px;line-height:16px;color:#555;font-weight:bold;transform:translate(0.20px,0.64px) scale(1.0817,1.083);transform-origin:0 12.16px;">?</span>
<svg style="left:15px;top:406px" width="15.5" height="15.5"><use href="#i-export"/></svg>
<svg style="left:40px;top:406px" width="16" height="16"><use href="#i-win"/></svg>
<svg style="left:61px;top:413px" width="7.2" height="4"><path d="M0 0h7.2l-3.6 4z" fill="#505050"/></svg>
<div class="sep" style="left:76px;top:407px;height:14px"></div>
<svg style="left:85px;top:406px" width="14" height="15"><use href="#i-cal"/></svg>
<svg style="left:105px;top:413px" width="7.2" height="4"><path d="M0 0h7.2l-3.6 4z" fill="#505050"/></svg>
<svg style="left:123.6px;top:405.6px" width="15.8" height="15.8"><use href="#i-clock"/></svg>
<svg style="left:145px;top:413px" width="7.2" height="4"><path d="M0 0h7.2l-3.6 4z" fill="#505050"/></svg>
<div class="sep" style="left:160px;top:407px;height:14px"></div>
<svg style="left:168px;top:406px" width="16" height="16"><use href="#i-gear"/></svg>
<svg style="left:189px;top:413px" width="7.2" height="4"><path d="M0 0h7.2l-3.6 4z" fill="#505050"/></svg>
<div style="left:8px;top:429px;width:1002px;height:23px;background:#ebeef2;border-top:1px solid #d3d3d3;border-bottom:1px solid #cfcfcf"></div>
<span class="t" style="left:13px;top:434px;font-size:10px;line-height:13px;color:#666;transform:translate(0.80px,0.24px) scaleX(1.0188);transform-origin:0 9.96px;">Name</span>
<div style="left:157px;top:429px;width:1px;height:23px;background:#cfcfcf"></div>
<span class="t" style="left:163px;top:434px;font-size:10px;line-height:13px;color:#666;transform:translate(0.80px,0.24px) scaleX(1.0593);transform-origin:0 9.96px;">Parent Host</span>
<div style="left:307px;top:429px;width:1px;height:23px;background:#cfcfcf"></div>
<span class="t" style="left:313px;top:434px;font-size:10px;line-height:13px;color:#666;transform:translate(0.80px,0.24px) scaleX(1.0486);transform-origin:0 9.96px;">Configured (Cores)</span>
<div style="left:457px;top:429px;width:1px;height:23px;background:#cfcfcf"></div>
<span class="t" style="left:463px;top:434px;font-size:10px;line-height:13px;color:#666;transform:translate(0.80px,0.24px) scaleX(1.0372);transform-origin:0 9.96px;">Entitlement (MHz)</span>
<div style="left:607px;top:429px;width:1px;height:23px;background:#cfcfcf"></div>
<span class="t" style="left:613px;top:434px;font-size:10px;line-height:13px;color:#666;transform:translate(0.80px,0.24px) scaleX(1.0337);transform-origin:0 9.96px;">Limit from Above (MHz)</span>
<div style="left:757px;top:429px;width:1px;height:23px;background:#cfcfcf"></div>
<span class="t" style="left:763px;top:434px;font-size:10px;line-height:13px;color:#666;transform:translate(0.80px,0.24px) scaleX(1.0599);transform-origin:0 9.96px;">Contention (%)</span>
<div style="left:907px;top:429px;width:1px;height:23px;background:#cfcfcf"></div>
<span class="t" style="left:913px;top:434px;font-size:10px;line-height:13px;color:#666;transform:translate(0.80px,0.24px) scaleX(1.0207);transform-origin:0 9.96px;">Swap wait (%) (at CP</span>
<div style="left:1009px;top:429px;width:1px;height:23px;background:#cfcfcf"></div>
<span class="t" style="left:13px;top:458px;font-size:12px;line-height:16px;color:#336699;font-weight:bold;transform:translate(0.95px,0.24px) scale(1.0121,1.083);transform-origin:0 12.16px;">vrbe-01a</span>
<span class="t" style="left:164px;top:457px;font-size:13px;line-height:16px;color:#2a2a2a;transform:translate(0.00px,0.90px) scaleX(0.9468);transform-origin:0 12.50px;">w2-mgmtpm-15.mgmt.l...</span>
<span class="t" style="left:313px;top:457px;font-size:13px;line-height:16px;color:#2a2a2a;transform:translate(0.15px,0.90px) scaleX(0.9621);transform-origin:0 12.50px;">1 Cores</span>
<span class="t" style="left:463px;top:457px;font-size:13px;line-height:16px;color:#2a2a2a;transform:translate(0.46px,0.90px) scaleX(0.9718);transform-origin:0 12.50px;">2,600</span>
<span class="t" style="left:613px;top:457px;font-size:13px;line-height:16px;color:#2a2a2a;transform:translate(0.48px,0.90px) scaleX(0.9485);transform-origin:0 12.50px;">2,600 MHz</span>
<span class="t" style="left:763px;top:457px;font-size:13px;line-height:16px;color:#2a2a2a;transform:translate(0.59px,0.90px) scaleX(0.9373);transform-origin:0 12.50px;">2.74 %</span>
<span class="t" style="left:913px;top:457px;font-size:13px;line-height:16px;color:#2a2a2a;transform:translate(0.72px,0.90px) scaleX(0.9377);transform-origin:0 12.50px;">0 %</span>
<div class="alt" style="left:8px;top:478px;width:984px;height:26px"></div>
<span class="t" style="left:13px;top:484px;font-size:12px;line-height:16px;color:#336699;font-weight:bold;transform:translate(0.58px,0.24px) scale(1.0172,1.083);transform-origin:0 12.16px;">2012R2CHEFTST</span>
<span class="t" style="left:164px;top:483px;font-size:13px;line-height:16px;color:#2a2a2a;transform:translate(0.00px,0.90px) scaleX(0.9468);transform-origin:0 12.50px;">w2-mgmtpm-15.mgmt.l...</span>
<span class="t" style="left:313px;top:483px;font-size:13px;line-height:16px;color:#2a2a2a;transform:translate(0.48px,0.90px) scaleX(0.9548);transform-origin:0 12.50px;">2 Cores</span>
<span class="t" style="left:463px;top:483px;font-size:13px;line-height:16px;color:#2a2a2a;transform:translate(0.60px,0.90px) scaleX(0.9677);transform-origin:0 12.50px;">5,200</span>
<span class="t" style="left:613px;top:483px;font-size:13px;line-height:16px;color:#2a2a2a;transform:translate(0.61px,0.90px) scaleX(0.9480);transform-origin:0 12.50px;">5,200 MHz</span>
<span class="t" style="left:763px;top:483px;font-size:13px;line-height:16px;color:#2a2a2a;transform:translate(0.26px,0.90px) scaleX(0.9454);transform-origin:0 12.50px;">1.98 %</span>
<span class="t" style="left:913px;top:483px;font-size:13px;line-height:16px;color:#2a2a2a;transform:translate(0.72px,0.90px) scaleX(0.9377);transform-origin:0 12.50px;">0 %</span>
<span class="t" style="left:13px;top:510px;font-size:12px;line-height:16px;color:#336699;font-weight:bold;transform:translate(0.19px,0.24px) scale(1.0223,1.083);transform-origin:0 12.16px;">mgmt-w1-mbx02</span>
<span class="t" style="left:164px;top:509px;font-size:13px;line-height:16px;color:#2a2a2a;transform:translate(0.00px,0.90px) scaleX(0.9468);transform-origin:0 12.50px;">w2-mgmtpm-15.mgmt.l...</span>
<span class="t" style="left:313px;top:509px;font-size:13px;line-height:16px;color:#2a2a2a;transform:translate(0.82px,0.90px) scaleX(0.9472);transform-origin:0 12.50px;">4 Cores</span>
<span class="t" style="left:463px;top:509px;font-size:13px;line-height:16px;color:#2a2a2a;transform:translate(0.14px,0.90px) scaleX(0.9669);transform-origin:0 12.50px;">10,400</span>
<span class="t" style="left:613px;top:509px;font-size:13px;line-height:16px;color:#2a2a2a;transform:translate(0.16px,0.90px) scaleX(0.9495);transform-origin:0 12.50px;">10,400 MHz</span>
<span class="t" style="left:763px;top:509px;font-size:13px;line-height:16px;color:#2a2a2a;transform:translate(0.26px,0.90px) scaleX(0.9454);transform-origin:0 12.50px;">1.92 %</span>
<span class="t" style="left:913px;top:509px;font-size:13px;line-height:16px;color:#2a2a2a;transform:translate(0.72px,0.90px) scaleX(0.9377);transform-origin:0 12.50px;">0 %</span>
<div class="alt" style="left:8px;top:530px;width:984px;height:26px"></div>
<span class="t" style="left:13px;top:536px;font-size:12px;line-height:16px;color:#336699;font-weight:bold;transform:translate(0.18px,0.24px) scale(1.0307,1.083);transform-origin:0 12.16px;">mgmt-w1-cas02</span>
<span class="t" style="left:164px;top:535px;font-size:13px;line-height:16px;color:#2a2a2a;transform:translate(0.00px,0.90px) scaleX(0.9468);transform-origin:0 12.50px;">w2-mgmtpm-15.mgmt.l...</span>
<span class="t" style="left:313px;top:535px;font-size:13px;line-height:16px;color:#2a2a2a;transform:translate(0.48px,0.90px) scaleX(0.9548);transform-origin:0 12.50px;">2 Cores</span>
<span class="t" style="left:463px;top:535px;font-size:13px;line-height:16px;color:#2a2a2a;transform:translate(0.60px,0.90px) scaleX(0.9677);transform-origin:0 12.50px;">5,200</span>
<span class="t" style="left:613px;top:535px;font-size:13px;line-height:16px;color:#2a2a2a;transform:translate(0.61px,0.90px) scaleX(0.9480);transform-origin:0 12.50px;">5,200 MHz</span>
<span class="t" style="left:763px;top:535px;font-size:13px;line-height:16px;color:#2a2a2a;transform:translate(0.26px,0.90px) scaleX(0.9454);transform-origin:0 12.50px;">1.73 %</span>
<span class="t" style="left:913px;top:535px;font-size:13px;line-height:16px;color:#2a2a2a;transform:translate(0.72px,0.90px) scaleX(0.9377);transform-origin:0 12.50px;">0 %</span>
<span class="t" style="left:13px;top:562px;font-size:12px;line-height:16px;color:#336699;font-weight:bold;transform:translate(0.19px,0.24px) scale(1.0222,1.083);transform-origin:0 12.16px;">mgmt-w1-cas01</span>
<span class="t" style="left:164px;top:561px;font-size:13px;line-height:16px;color:#2a2a2a;transform:translate(0.00px,0.90px) scaleX(0.9468);transform-origin:0 12.50px;">w2-mgmtpm-15.mgmt.l...</span>
<span class="t" style="left:313px;top:561px;font-size:13px;line-height:16px;color:#2a2a2a;transform:translate(0.48px,0.90px) scaleX(0.9548);transform-origin:0 12.50px;">2 Cores</span>
<span class="t" style="left:463px;top:561px;font-size:13px;line-height:16px;color:#2a2a2a;transform:translate(0.60px,0.90px) scaleX(0.9677);transform-origin:0 12.50px;">5,200</span>
<span class="t" style="left:613px;top:561px;font-size:13px;line-height:16px;color:#2a2a2a;transform:translate(0.61px,0.90px) scaleX(0.9480);transform-origin:0 12.50px;">5,200 MHz</span>
<span class="t" style="left:763px;top:561px;font-size:13px;line-height:16px;color:#2a2a2a;transform:translate(0.26px,0.90px) scaleX(0.9454);transform-origin:0 12.50px;">1.45 %</span>
<span class="t" style="left:913px;top:561px;font-size:13px;line-height:16px;color:#2a2a2a;transform:translate(0.72px,0.90px) scaleX(0.9377);transform-origin:0 12.50px;">0 %</span>
<div class="alt" style="left:8px;top:582px;width:984px;height:26px"></div>
<span class="t" style="left:13px;top:588px;font-size:12px;line-height:16px;color:#336699;font-weight:bold;transform:translate(0.21px,0.24px) scale(1.0010,1.083);transform-origin:0 12.16px;">mgmt-w-sqlnode2</span>
<span class="t" style="left:164px;top:587px;font-size:13px;line-height:16px;color:#2a2a2a;transform:translate(0.00px,0.90px) scaleX(0.9468);transform-origin:0 12.50px;">w2-mgmtpm-15.mgmt.l...</span>
<span class="t" style="left:313px;top:587px;font-size:13px;line-height:16px;color:#2a2a2a;transform:translate(0.48px,0.90px) scaleX(0.9548);transform-origin:0 12.50px;">2 Cores</span>
<span class="t" style="left:463px;top:587px;font-size:13px;line-height:16px;color:#2a2a2a;transform:translate(0.60px,0.90px) scaleX(0.9677);transform-origin:0 12.50px;">5,200</span>
<span class="t" style="left:613px;top:587px;font-size:13px;line-height:16px;color:#2a2a2a;transform:translate(0.61px,0.90px) scaleX(0.9480);transform-origin:0 12.50px;">5,200 MHz</span>
<span class="t" style="left:763px;top:587px;font-size:13px;line-height:16px;color:#2a2a2a;transform:translate(0.26px,0.90px) scaleX(0.9454);transform-origin:0 12.50px;">1.26 %</span>
<span class="t" style="left:913px;top:587px;font-size:13px;line-height:16px;color:#2a2a2a;transform:translate(0.72px,0.90px) scaleX(0.9377);transform-origin:0 12.50px;">0 %</span>
<span class="t" style="left:13px;top:614px;font-size:12px;line-height:16px;color:#336699;font-weight:bold;transform:translate(0.95px,0.24px) scale(1.0253,1.083);transform-origin:0 12.16px;">vrops60-rtm</span>
<span class="t" style="left:164px;top:613px;font-size:13px;line-height:16px;color:#2a2a2a;transform:translate(0.00px,0.90px) scaleX(0.9468);transform-origin:0 12.50px;">w2-mgmtpm-15.mgmt.l...</span>
<span class="t" style="left:313px;top:613px;font-size:13px;line-height:16px;color:#2a2a2a;transform:translate(0.82px,0.90px) scaleX(0.9472);transform-origin:0 12.50px;">4 Cores</span>
<span class="t" style="left:463px;top:613px;font-size:13px;line-height:16px;color:#2a2a2a;transform:translate(0.14px,0.90px) scaleX(0.9669);transform-origin:0 12.50px;">10,400</span>
<span class="t" style="left:613px;top:613px;font-size:13px;line-height:16px;color:#2a2a2a;transform:translate(0.16px,0.90px) scaleX(0.9495);transform-origin:0 12.50px;">10,400 MHz</span>
<span class="t" style="left:763px;top:613px;font-size:13px;line-height:16px;color:#2a2a2a;transform:translate(0.26px,0.90px) scaleX(0.9498);transform-origin:0 12.50px;">1.1 %</span>
<span class="t" style="left:913px;top:613px;font-size:13px;line-height:16px;color:#2a2a2a;transform:translate(0.72px,0.90px) scaleX(0.9377);transform-origin:0 12.50px;">0 %</span>
<div class="alt" style="left:8px;top:634px;width:984px;height:26px"></div>
<span class="t" style="left:13px;top:640px;font-size:12px;line-height:16px;color:#336699;font-weight:bold;transform:translate(0.95px,0.24px) scale(1.0338,1.083);transform-origin:0 12.16px;">vra-01a</span>
<span class="t" style="left:164px;top:639px;font-size:13px;line-height:16px;color:#2a2a2a;transform:translate(0.00px,0.90px) scaleX(0.9468);transform-origin:0 12.50px;">w2-mgmtpm-15.mgmt.l...</span>
<span class="t" style="left:313px;top:639px;font-size:13px;line-height:16px;color:#2a2a2a;transform:translate(0.48px,0.90px) scaleX(0.9548);transform-origin:0 12.50px;">2 Cores</span>
<span class="t" style="left:463px;top:639px;font-size:13px;line-height:16px;color:#2a2a2a;transform:translate(0.60px,0.90px) scaleX(0.9677);transform-origin:0 12.50px;">5,200</span>
<span class="t" style="left:613px;top:639px;font-size:13px;line-height:16px;color:#2a2a2a;transform:translate(0.61px,0.90px) scaleX(0.9480);transform-origin:0 12.50px;">5,200 MHz</span>
<span class="t" style="left:763px;top:639px;font-size:13px;line-height:16px;color:#2a2a2a;transform:translate(0.73px,0.90px) scaleX(0.9339);transform-origin:0 12.50px;">0.97 %</span>
<span class="t" style="left:913px;top:639px;font-size:13px;line-height:16px;color:#2a2a2a;transform:translate(0.72px,0.90px) scaleX(0.9377);transform-origin:0 12.50px;">0 %</span>
<span class="t" style="left:13px;top:666px;font-size:12px;line-height:16px;color:#336699;font-weight:bold;transform:translate(0.21px,0.24px) scale(1.0025,1.083);transform-origin:0 12.16px;">mgmt-w-sqlnode3</span>
<span class="t" style="left:164px;top:665px;font-size:13px;line-height:16px;color:#2a2a2a;transform:translate(0.00px,0.90px) scaleX(0.9468);transform-origin:0 12.50px;">w2-mgmtpm-15.mgmt.l...</span>
<span class="t" style="left:313px;top:665px;font-size:13px;line-height:16px;color:#2a2a2a;transform:translate(0.48px,0.90px) scaleX(0.9548);transform-origin:0 12.50px;">2 Cores</span>
<span class="t" style="left:463px;top:665px;font-size:13px;line-height:16px;color:#2a2a2a;transform:translate(0.60px,0.90px) scaleX(0.9677);transform-origin:0 12.50px;">5,200</span>
<span class="t" style="left:613px;top:665px;font-size:13px;line-height:16px;color:#2a2a2a;transform:translate(0.61px,0.90px) scaleX(0.9480);transform-origin:0 12.50px;">5,200 MHz</span>
<span class="t" style="left:763px;top:665px;font-size:13px;line-height:16px;color:#2a2a2a;transform:translate(0.73px,0.90px) scaleX(0.9339);transform-origin:0 12.50px;">0.88 %</span>
<span class="t" style="left:913px;top:665px;font-size:13px;line-height:16px;color:#2a2a2a;transform:translate(0.72px,0.90px) scaleX(0.9377);transform-origin:0 12.50px;">0 %</span>
<div class="alt" style="left:8px;top:686px;width:984px;height:25px"></div>
<span class="t" style="left:13px;top:692px;font-size:12px;line-height:16px;color:#336699;font-weight:bold;transform:translate(0.20px,0.24px) scale(1.0149,1.083);transform-origin:0 12.16px;">bca-loadhere2</span>
<span class="t" style="left:164px;top:691px;font-size:13px;line-height:16px;color:#2a2a2a;transform:translate(0.00px,0.90px) scaleX(0.9468);transform-origin:0 12.50px;">w2-mgmtpm-15.mgmt.l...</span>
<span class="t" style="left:313px;top:691px;font-size:13px;line-height:16px;color:#2a2a2a;transform:translate(0.48px,0.90px) scaleX(0.9548);transform-origin:0 12.50px;">2 Cores</span>
<span class="t" style="left:463px;top:691px;font-size:13px;line-height:16px;color:#2a2a2a;transform:translate(0.60px,0.90px) scaleX(0.9677);transform-origin:0 12.50px;">5,200</span>
<span class="t" style="left:613px;top:691px;font-size:13px;line-height:16px;color:#2a2a2a;transform:translate(0.61px,0.90px) scaleX(0.9480);transform-origin:0 12.50px;">5,200 MHz</span>
<span class="t" style="left:763px;top:691px;font-size:13px;line-height:16px;color:#2a2a2a;transform:translate(0.73px,0.90px) scaleX(0.9339);transform-origin:0 12.50px;">0.82 %</span>
<span class="t" style="left:913px;top:691px;font-size:13px;line-height:16px;color:#2a2a2a;transform:translate(0.72px,0.90px) scaleX(0.9377);transform-origin:0 12.50px;">0 %</span>
<div style="left:157px;top:452px;width:1px;height:259px;background:#d0d0d0"></div>
<div style="left:307px;top:452px;width:1px;height:259px;background:#d0d0d0"></div>
<div style="left:457px;top:452px;width:1px;height:259px;background:#d0d0d0"></div>
<div style="left:607px;top:452px;width:1px;height:259px;background:#d0d0d0"></div>
<div style="left:757px;top:452px;width:1px;height:259px;background:#d0d0d0"></div>
<div style="left:907px;top:452px;width:1px;height:259px;background:#d0d0d0"></div>
<div style="left:992px;top:452px;width:17px;height:259px;background:#f1f1f1"></div>
<div style="left:994px;top:469px;width:13px;height:125px;background:#c1c1c1"></div>
<svg style="left:997px;top:459px" width="7" height="4"><path d="M0 4l3.5-4 3.5 4z" fill="#a3a3a3"/></svg>
<svg style="left:997px;top:700px" width="7" height="4"><path d="M0 0l3.5 4 3.5-4z" fill="#505050"/></svg>
<div style="left:8px;top:711px;width:984px;height:17px;background:#f1f1f1"></div>
<div style="left:25px;top:713px;width:479px;height:13px;background:#c1c1c1"></div>
<svg style="left:14px;top:716px" width="4" height="7"><path d="M4 0l-4 3.5 4 3.5z" fill="#8a8a8a"/></svg>
<svg style="left:981px;top:716px" width="4" height="7"><path d="M0 0l4 3.5-4 3.5z" fill="#505050"/></svg>
<div style="left:8px;top:728px;width:1002px;height:27px;background:#eceff4;border-top:1px solid #d3d3d3"></div>
<svg style="left:17px;top:735.7px;fill:url(#gNavD)" width="10.5" height="12"><use href="#i-first"/></svg>
<svg style="left:43.5px;top:735.7px;fill:url(#gNavD)" width="6.6" height="12"><use href="#i-prev"/></svg>
<div class="sep" style="left:62px;top:735px;height:14px"></div>
<span class="t" style="left:69px;top:733px;font-size:13px;line-height:16px;color:#666;transform:translate(0.25px,0.50px) scaleX(0.9815);transform-origin:0 12.50px;">Page</span>
<div style="left:107px;top:731px;width:30px;height:22px;border:1px solid #a9a9a9;background:#fff"></div>
<span class="t" style="left:111px;top:733px;font-size:13px;line-height:16px;color:#444;transform:translate(0.60px,0.50px) scaleX(0.9350);transform-origin:0 12.50px;">1</span>
<span class="t" style="left:142px;top:733px;font-size:13px;line-height:16px;color:#666;transform:translate(0.89px,0.50px) scaleX(0.9265);transform-origin:0 12.50px;">of 1</span>
<div class="sep" style="left:169px;top:735px;height:14px"></div>
<svg style="left:181.5px;top:735.7px;fill:url(#gNavD)" width="6.6" height="12"><use href="#i-next"/></svg>
<svg style="left:206px;top:735.7px;fill:url(#gNavD)" width="10.5" height="12"><use href="#i-last"/></svg>
<div class="sep" style="left:225px;top:735px;height:14px"></div>
<svg style="left:233.8px;top:734.7px" width="14.6" height="14.4"><use href="#i-refresh"/></svg>
<span class="t" style="left:878px;top:733px;font-size:13px;line-height:16px;color:#666;transform:translate(0.49px,0.50px) scaleX(0.9480);transform-origin:0 12.50px;">Displaying 1 - 17 of 17</span>
</div>
</body>
</html>
